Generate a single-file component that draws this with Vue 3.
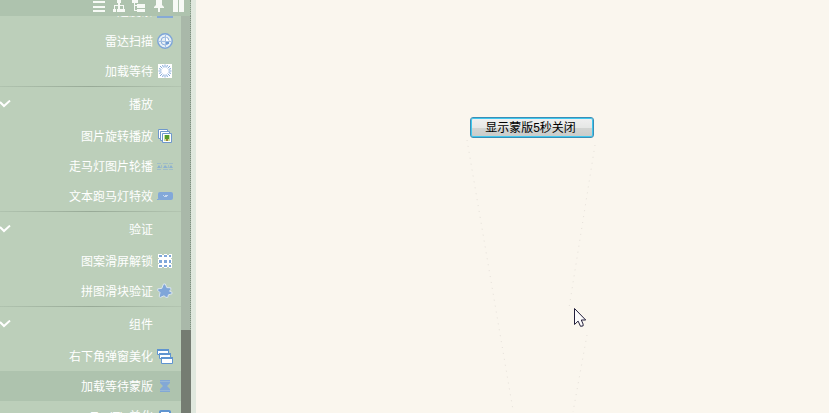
<template>
  <div class="workspace">
    <aside class="sidebar">
      <header class="toolbar">
        <button v-for="tool in tools" :key="tool.name" type="button" class="tool-btn" :aria-label="tool.name">
          <svg width="14" height="14" viewBox="0 0 14 14" fill="#f7faf6"><path :d="tool.path" /></svg>
        </button>
      </header>

      <div class="panel">
        <nav class="menu">
          <section v-for="(group, index) in groups" :key="index" class="group">
            <button v-if="group.title" type="button" class="group-title" @click="group.open = !group.open">
              <svg width="11" height="8" viewBox="0 0 11 8" fill="none" stroke="#fff" stroke-width="2"><path d="M0 2 L4 6 L10 0.6" /></svg>
              <span class="label">{{ group.title }}</span>
            </button>
            <ul v-if="group.open">
              <li v-for="item in group.items" :key="item.name">
                <button type="button" class="item" :class="{ active: item.name === selected }" @click="selected = item.name">
                  <span class="label">{{ item.name }}</span>
                  <svg v-if="item.icon === 'bar'" width="16" height="16" viewBox="0 0 16 16"><path d="M0 13h16v2H0z" fill="#86aad6" /></svg>
                  <svg v-else-if="item.icon === 'radar'" width="16" height="16" viewBox="0 0 16 16" fill="none">
                    <circle cx="8" cy="8" r="7.2" fill="#e6eff5" stroke="#7da5d8" stroke-width="1.4" />
                    <circle cx="8" cy="8" r="4" stroke="#8daedb" />
                    <path d="M8.5 2v12M2 8.5h12" stroke="#a3bfe2" />
                    <path d="M9 8V4l3 4z" fill="#fff" />
                    <path d="M9 9h3v2H9z" fill="#6f9cd4" />
                  </svg>
                  <svg v-else-if="item.icon === 'sun'" width="16" height="16" viewBox="0 0 16 16">
                    <path d="M1 1h14v14H1z" fill="#fff" />
                    <path d="M8 1.5v3M8 11.5v3M1.5 8h3M11.5 8h3M3 3l2.4 2.4M10.6 10.6L13 13M13 3l-2.4 2.4M5.4 10.6L3 13M5.5 2l1 2.4M9.5 11.6l1 2.4M10.5 2l-1 2.4M6.5 11.6l-1 2.4M2 5.5l2.4 1M11.6 9.5l2.4 1M14 5.5l-2.4 1M4.4 9.5l-2.4 1" stroke="#86abda" />
                  </svg>
                  <svg v-else-if="item.icon === 'photos'" width="16" height="16" viewBox="0 0 16 16" fill="#fff" stroke="#6f98cb">
                    <path d="M1.5 1.5h9v9h-9z" />
                    <path d="M3.5 3.5h9v9h-9z" />
                    <path d="M5.5 5.5h9v9h-9z" />
                    <path d="M7 7h6v6H7z" fill="#c9df9d" stroke="none" />
                    <path d="M8 7h4v4H8z" fill="#569b2c" stroke="none" />
                    <path d="M9 11h2v2H9z" fill="#a08436" stroke="none" />
                  </svg>
                  <svg v-else-if="item.icon === 'carousel'" width="16" height="16" viewBox="0 0 16 16" fill="#8db1cf">
                    <path d="M0 5h4v1H0zM6 5h5v1H6zM12 5h4v1h-4zM0 11h4v1H0zM6 11h5v1H6zM12 11h4v1h-4zM4 7h1v3H4zM11 7h1v3h-1z" opacity="0.6" />
                    <path d="M0 10l2-3 2 3zM6 10l2-3 3 3zM12 10l2-3 2 3zM1 8h1v1H1z" />
                  </svg>
                  <svg v-else-if="item.icon === 'marquee'" width="16" height="16" viewBox="0 0 16 16">
                    <rect x="1" y="4" width="15" height="8" rx="2" fill="#82a8d9" />
                    <path d="M0 11h2v1H0z" fill="#82a8d9" />
                    <path d="M6 7h1v1H6zM8 7h3v1H8zM7 8h3v1H7z" fill="#c6d8ee" />
                  </svg>
                  <svg v-else-if="item.icon === 'grid'" width="16" height="16" viewBox="0 0 16 16">
                    <path d="M1 1h14v14H1z" fill="#fff" />
                    <path d="M2 2h3v2H2zM7 2h3v2H7zM12 2h2v2h-2zM2 7h3v3H2zM7 7h3v3H7zM12 7h2v3h-2zM2 12h3v2H2zM7 12h3v2H7zM12 12h2v2h-2z" fill="#7fa7d9" />
                    <path d="M5 1h2v1H5zM10 1h2v1h-2zM1 5h1v1H1zM14 5h1v1h-1zM1 10h1v1H1zM14 10h1v1h-1zM5 14h2v1H5zM10 14h2v1h-2z" fill="#bccfba" />
                  </svg>
                  <svg v-else-if="item.icon === 'star'" width="16" height="16" viewBox="0 0 16 16">
                    <path d="M6.5 1h1.8l1.5 3.6 4 .2v1.8l-1.3 1.6 2.5 1v1.6l-3.6 1-.6 2.6H9l-2-1.6-3.6 1.6-1.2-.8.8-4-2.2-2.2V5.8l4-.4z" fill="#7fa6d9" stroke="#dae5ee" stroke-linejoin="round" />
                  </svg>
                  <svg v-else-if="item.icon === 'windows'" width="16" height="16" viewBox="0 0 16 16" fill="#fff" stroke="#5f94d0">
                    <path d="M0.5 1.5h11v5h-11z" />
                    <path d="M0 2h12" stroke-width="2" />
                    <path d="M2.5 5.5h11v5h-11z" />
                    <path d="M2 6h12" stroke-width="2" />
                    <path d="M4.5 9.5h11v6h-11z" />
                    <path d="M4 10h12" stroke-width="2" />
                  </svg>
                  <svg v-else-if="item.icon === 'hourglass'" width="16" height="16" viewBox="0 0 16 16">
                    <path d="M3 2h10v3l-3 3 3 3v3H3v-3l3-3-3-3z" fill="#82a8d6" />
                    <path d="M3 3.5h10M3 12.5h10" stroke="#98b7d4" />
                  </svg>
                  <svg v-else width="16" height="16" viewBox="0 0 16 16" fill="#fff" stroke="#5f94d0"><rect x="3" y="3" width="10" height="10" rx="1" stroke-width="2" /></svg>
                </button>
              </li>
            </ul>
          </section>
        </nav>
        <div class="scrollbar"><div class="thumb"></div></div>
      </div>
    </aside>

    <main class="stage">
      <button type="button" class="show-btn">显示蒙版5秒关闭</button>
      <svg class="trail" width="140" height="273" viewBox="0 0 140 273" fill="none" stroke="#e6e1da" stroke-dasharray="1 5">
        <path d="M7 0L53 270M135 5L109 168M127 195L113 272" />
      </svg>
      <svg class="pointer" width="13" height="20" viewBox="0 0 13 20">
        <path d="M0.5 0.5v16l3.6-3.4 2.4 5.2 2.6-.4v-1.8L7.3 12h4.4z" fill="#fdfcfc" stroke="#23203c" />
      </svg>
    </main>
  </div>
</template>

<script setup>
import { ref } from 'vue'

const selected = ref('加载等待蒙版')

const tools = [
  { name: '列表', path: 'M1 1h12v2H1zM1 6h12v2H1zM1 10h12v2H1z' },
  { name: '结构图', path: 'M5 0h4v3H8v2h4v4h1v3h-4V9h2V6H8v3h1v3H5V9h1V6H3v3h1v3H1V9h1V5h4V3H5z' },
  { name: '树形', path: 'M0 0h6v3H3v2h2V4h8v4H5V6H3v4h2V9h8v3H5v-1H2V3H0z' },
  { name: '固定', path: 'M4 0h6v5l2 2v1H8v4H6V8H2V7l2-2z' },
  { name: '分栏', path: 'M1 0h5v12H1zM7 0h5v12H7z' }
]

const groups = ref([
  {
    title: '',
    open: true,
    items: [
      { name: '进度条', icon: 'bar' },
      { name: '雷达扫描', icon: 'radar' },
      { name: '加载等待', icon: 'sun' }
    ]
  },
  {
    title: '播放',
    open: true,
    items: [
      { name: '图片旋转播放', icon: 'photos' },
      { name: '走马灯图片轮播', icon: 'carousel' },
      { name: '文本跑马灯特效', icon: 'marquee' }
    ]
  },
  {
    title: '验证',
    open: true,
    items: [
      { name: '图案滑屏解锁', icon: 'grid' },
      { name: '拼图滑块验证', icon: 'star' }
    ]
  },
  {
    title: '组件',
    open: true,
    items: [
      { name: '右下角弹窗美化', icon: 'windows' },
      { name: '加载等待蒙版', icon: 'hourglass' },
      { name: 'ToolTip美化', icon: 'box' }
    ]
  }
])
</script>

<style>
body {
  margin: 0;
  background: #faf6ee;
}
</style>

<style scoped>
.workspace {
  display: flex;
  height: 100vh;
  overflow: hidden;
  font-family: "Liberation Sans", "Noto Sans CJK SC", sans-serif;
  font-size: 12px;
}

button {
  border: none;
  padding: 0;
  background: none;
  font: inherit;
  color: inherit;
  cursor: default;
}

.sidebar {
  box-sizing: border-box;
  flex: 0 0 196px;
  display: flex;
  flex-direction: column;
  background: #bccfba;
  border-right: 5px solid #e0e8de;
  color: #fff;
}

.toolbar {
  display: flex;
  flex: 0 0 16px;
  justify-content: flex-end;
  gap: 6px;
  padding-right: 4px;
  background: #aec3ae;
  border-right: 1px dotted #879887;
}

.tool-btn {
  width: 14px;
  height: 14px;
}

.tool-btn svg {
  display: block;
}

.panel {
  display: flex;
  flex: 1;
  min-height: 0;
  overflow: hidden;
}

.menu {
  flex: 1;
  margin-top: -20px;
}

.group + .group {
  padding-top: 1px;
  background: linear-gradient(90deg, #b0c3af, #98aa97 50%, #b3c5b1) top / 100% 1px no-repeat;
}

.group-title {
  display: flex;
  align-items: center;
  justify-content: space-between;
  width: 100%;
  height: 34px;
  padding-right: 28px;
}

.label {
  padding-bottom: 2px;
}

ul {
  margin: 0;
  padding: 0;
  list-style: none;
}

.item {
  display: flex;
  align-items: center;
  justify-content: flex-end;
  gap: 4px;
  width: 100%;
  height: 30px;
  padding-right: 8px;
}

.item.active {
  background: #aec3ae;
}

.scrollbar {
  display: flex;
  align-items: flex-end;
  flex: 0 0 9px;
  background: #a9b8a9;
  border-right: 1px dotted #7f8f7f;
}

.thumb {
  width: 10px;
  height: 21%;
  margin-right: -1px;
  background: #757c72;
}

.stage {
  position: relative;
  flex: 1;
  padding: 117px 0 0 274px;
}

.show-btn {
  display: block;
  width: 124px;
  height: 21px;
  padding-right: 3px;
  border: 1px solid #3c8db5;
  border-radius: 3px;
  background: linear-gradient(#f0f0f0, #e6e7e6 50%, #d2d4d2 55%, #c9cbc9);
  box-shadow: inset 0 0 0 1px #3fc8ee;
  color: #000;
  line-height: 18px;
}

.trail {
  position: absolute;
  top: 140px;
  left: 264px;
}

.pointer {
  position: absolute;
  top: 308px;
  left: 378px;
}
</style>
